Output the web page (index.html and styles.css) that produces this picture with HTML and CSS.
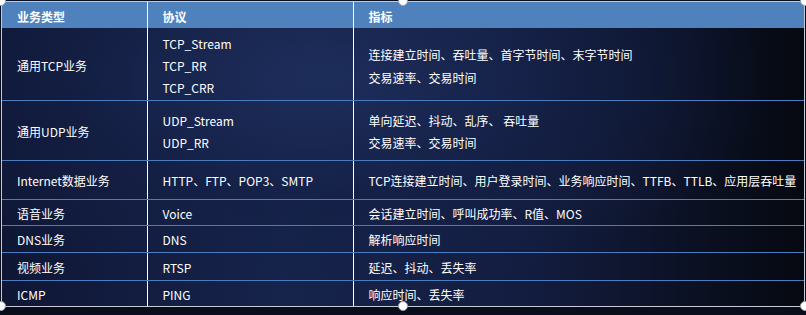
FILE: index.html
```html
<!DOCTYPE html>
<html lang="zh-CN">
<head>
<meta charset="utf-8">
<title>业务类型</title>
<link rel="stylesheet" href="styles.css">
</head>
<body>
<div class="frame">
  <table class="grid">
    <colgroup>
      <col class="c1"><col class="c2"><col class="c3">
    </colgroup>
    <thead>
      <tr class="h-head">
        <th>业务类型</th><th>协议</th><th>指标</th>
      </tr>
    </thead>
    <tbody>
      <tr class="h-r1">
        <td class="shift-a">通用TCP业务</td>
        <td class="shift-a"><div class="ln">TCP_Stream</div><div class="ln">TCP_RR</div><div class="ln">TCP_CRR</div></td>
        <td class="shift-a"><div class="ln2">连接建立时间、吞吐量、首字节时间、末字节时间</div><div class="ln2">交易速率、交易时间</div></td>
      </tr>
      <tr class="h-r2">
        <td class="shift-b">通用UDP业务</td>
        <td class="shift-b"><div class="ln">UDP_Stream</div><div class="ln">UDP_RR</div></td>
        <td class="shift-b"><div class="ln">单向延迟、抖动、乱序、 吞吐量</div><div class="ln">交易速率、交易时间</div></td>
      </tr>
      <tr class="h-r3">
        <td>Internet数据业务</td>
        <td>HTTP、FTP、POP3、SMTP</td>
        <td>TCP连接建立时间、用户登录时间、业务响应时间、TTFB、TTLB、应用层吞吐量</td>
      </tr>
      <tr class="h-r4">
        <td>语音业务</td><td>Voice</td><td>会话建立时间、呼叫成功率、R值、MOS</td>
      </tr>
      <tr class="h-r5">
        <td>DNS业务</td><td>DNS</td><td>解析响应时间</td>
      </tr>
      <tr class="h-r6">
        <td>视频业务</td><td>RTSP</td><td>延迟、抖动、丢失率</td>
      </tr>
      <tr class="h-r7">
        <td>ICMP</td><td>PING</td><td>响应时间、丢失率</td>
      </tr>
    </tbody>
  </table>
  <span class="handle tl"></span>
  <span class="handle tm"></span>
  <span class="handle tr"></span>
  <span class="handle bl"></span>
  <span class="handle bm"></span>
  <span class="handle br"></span>
</div>
</body>
</html>
```

FILE: styles.css
```css
html, body {
  margin: 0;
  padding: 0;
}
body {
  background: #090d1c;
  width: 806px;
  height: 315px;
  overflow: hidden;
  font-family: "Noto Sans CJK SC", "Noto Sans", sans-serif;
  font-size: 12px;
  color: #ffffff;
}
.frame {
  position: relative;
  margin: 1px 0 0 1px;
  width: 802px;
  border: 1px solid #c7cad2;
  background:
    radial-gradient(ellipse 70% 90% at 40% 25%, rgba(30,46,92,0.95) 0%, rgba(20,32,70,0.6) 45%, rgba(0,0,0,0) 80%),
    linear-gradient(to right, #0f1735 0%, #16234b 35%, #131d40 65%, #060911 100%);
}
.grid {
  width: 802px;
  border-collapse: collapse;
  table-layout: fixed;
}
.c1 { width: 145px; }
.c2 { width: 206px; }
.c3 { width: 451px; }
th, td {
  padding: 3px 0 0 15px;
  text-align: left;
  vertical-align: middle;
  line-height: 16px;
  white-space: nowrap;
  border-bottom: 1px solid #4a7dc0;
  border-left: 1px solid #ffffff;
}
th:first-child, td:first-child { border-left: none; }
thead th {
  background: #4f81bd;
  font-weight: bold;
  border-bottom: none;
  border-left: none;
}
thead th + th { border-left: 1px solid #ffffff; }
tbody tr:last-child td { border-bottom: none; }
.h-head { height: 26px; }
.h-r1 { height: 72px; }
.h-r2 { height: 60px; }
.h-r3 { height: 39px; }
.h-r4 { height: 26px; }
.h-r5 { height: 27px; }
.h-r6 { height: 28px; }
.h-r7 { height: 26px; }
.shift-a { padding-top: 5px; }
.shift-b { padding-top: 3px; }
.ln { line-height: 22px; }
.ln2 { line-height: 23px; }
.handle {
  position: absolute;
  width: 10px;
  height: 10px;
  border-radius: 50%;
  background: #ffffff;
  border: 1px solid #9aa0aa;
  box-sizing: border-box;
  transform: translate(-50%, -50%);
}
.tl { left: -1px; top: -1px; }
.tm { left: 401px; top: -1px; }
.tr { left: 803px; top: -1px; }
.bl { left: -1px; top: 100%; }
.bm { left: 401px; top: 100%; }
.br { left: 803px; top: 100%; }
```
